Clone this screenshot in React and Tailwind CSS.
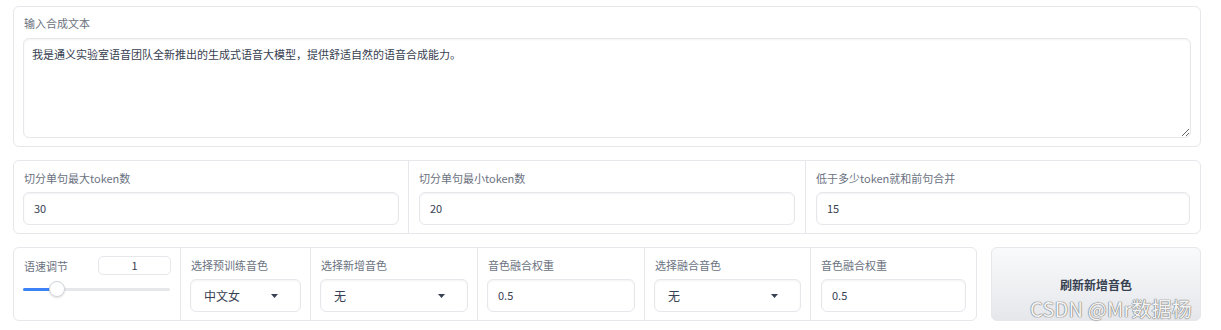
import React from "react";

function Label({ children, className = "" }) {
  return (
    <div className={"text-[11px] leading-[16px] text-[#6b7280] " + className}>
      {children}
    </div>
  );
}

function TextBox({ value, className = "" }) {
  return (
    <div
      className={
        "flex items-center h-[33px] rounded-[6px] border border-[#e5e7eb] bg-white px-[10px] text-[11px] text-[#374151] shadow-[inset_0_1px_2px_rgba(0,0,0,0.05)] " +
        className
      }
    >
      {value}
    </div>
  );
}

function Dropdown({ value }) {
  return (
    <div className="flex items-center justify-between h-[33px] rounded-[6px] border border-[#e5e7eb] bg-white pl-[13px] pr-[22px] text-[12px] text-[#374151] shadow-[inset_0_1px_2px_rgba(0,0,0,0.05)]">
      <span>{value}</span>
      <svg width="7" height="4" viewBox="0 0 7 4">
        <path d="M0 0 L7 0 L3.5 4 Z" fill="#374151" />
      </svg>
    </div>
  );
}

export default function App() {
  return (
    <div className="relative w-[1221px] h-[330px] bg-white font-['Noto_Sans_CJK_SC',sans-serif] pl-[13px] pt-[6px] overflow-hidden">
      {/* Card 1 */}
      <div className="w-[1188px] h-[141px] rounded-[6px] border border-[#e5e7eb] bg-white px-[9px] pt-[8px]">
        <Label className="pl-[1px]">输入合成文本</Label>
        <textarea
          className="mt-[7px] block w-[1168px] h-[100px] rounded-[6px] border border-[#e5e7eb] bg-white px-[8px] py-[7px] text-[11px] leading-[16px] text-[#374151] outline-none resize-y shadow-[inset_0_1px_2px_rgba(0,0,0,0.05)]"
          defaultValue="我是通义实验室语音团队全新推出的生成式语音大模型，提供舒适自然的语音合成能力。"
        />
      </div>

      {/* Card 2 */}
      <div className="mt-[13px] w-[1188px] h-[74px] rounded-[6px] border border-[#e5e7eb] bg-white flex">
        <div className="w-[395px] px-[9px] pt-[9px] border-r border-[#e5e7eb]">
          <Label className="pl-[1px]">切分单句最大token数</Label>
          <TextBox value="30" className="mt-[6px]" />
        </div>
        <div className="w-[397px] px-[10px] pt-[9px] border-r border-[#e5e7eb]">
          <Label>切分单句最小token数</Label>
          <TextBox value="20" className="mt-[6px]" />
        </div>
        <div className="flex-1 px-[10px] pt-[9px]">
          <Label>低于多少token就和前句合并</Label>
          <TextBox value="15" className="mt-[6px]" />
        </div>
      </div>

      {/* Row 3 */}
      <div className="mt-[13px] flex gap-[14px]">
        <div className="w-[964px] h-[74px] rounded-[6px] border border-[#e5e7eb] bg-white flex">
          <div className="w-[167px] px-[9px] pt-[8px] border-r border-[#e5e7eb]">
            <div className="flex items-center justify-between">
              <Label className="pl-[1px] mt-[1px]">语速调节</Label>
              <div className="w-[73px] h-[19px] rounded-[5px] border border-[#e5e7eb] flex items-center justify-center text-[11px] text-[#374151]">
                1
              </div>
            </div>
            <div className="relative mt-[13px] h-[3px] w-[147px] rounded-full bg-[#e5e7eb]">
              <div className="absolute left-0 top-0 h-[3px] w-[30px] rounded-full bg-[#3b82f6]" />
              <div className="absolute left-[26px] top-[-7px] w-[16px] h-[16px] rounded-full bg-white border border-[#d1d5db] shadow-[0_1px_2px_rgba(0,0,0,0.12)]" />
            </div>
          </div>
          <div className="w-[130px] px-[9px] pt-[9px] border-r border-[#e5e7eb]">
            <Label className="pl-[1px]">选择预训练音色</Label>
            <div className="mt-[6px]">
              <Dropdown value="中文女" />
            </div>
          </div>
          <div className="w-[167px] px-[9px] pt-[9px] border-r border-[#e5e7eb]">
            <Label className="pl-[1px]">选择新增音色</Label>
            <div className="mt-[6px]">
              <Dropdown value="无" />
            </div>
          </div>
          <div className="w-[167px] px-[9px] pt-[9px] border-r border-[#e5e7eb]">
            <Label className="pl-[1px]">音色融合权重</Label>
            <TextBox value="0.5" className="mt-[6px]" />
          </div>
          <div className="w-[166px] px-[9px] pt-[9px] border-r border-[#e5e7eb]">
            <Label className="pl-[1px]">选择融合音色</Label>
            <div className="mt-[6px]">
              <Dropdown value="无" />
            </div>
          </div>
          <div className="flex-1 px-[10px] pt-[9px]">
            <Label>音色融合权重</Label>
            <TextBox value="0.5" className="mt-[6px]" />
          </div>
        </div>
        <button className="w-[210px] h-[74px] rounded-[6px] border border-[#e5e7eb] bg-gradient-to-b from-[#f9fafb] to-[#e5e7eb] text-[12px] font-bold text-[#374151] flex items-center justify-center pt-[2px]">
          刷新新增音色
        </button>
      </div>

      {/* Watermark */}
      <div className="absolute left-[1030px] top-[294px] text-[20px] leading-[30px] tracking-[0.2px] text-[#f3f3f3] [text-shadow:0_0_1px_#7a7a7a,0_0_1px_#7a7a7a,0_0_1px_#7a7a7a] whitespace-nowrap">
        CSDN @Mr数据杨
      </div>
    </div>
  );
}
